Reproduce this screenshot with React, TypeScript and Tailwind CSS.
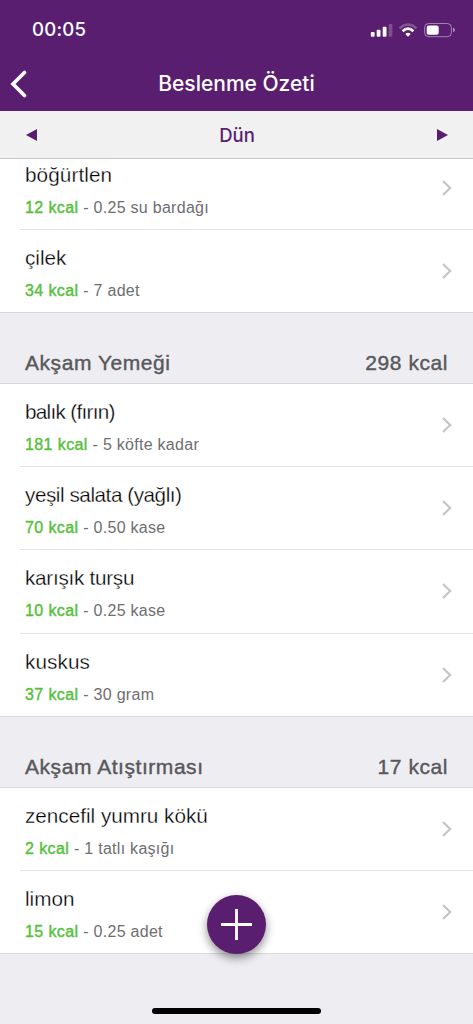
import React from 'react';

type Food = {
  name: string;
  kcal: number;
  amount: string;
  tracking?: string;
};

type Meal = {
  title: string;
  total?: number;
  foods: Food[];
};

const MEALS: Meal[] = [
  {
    title: 'Ara Öğün',
    foods: [
      { name: 'böğürtlen', kcal: 12, amount: '0.25 su bardağı', tracking: 'tracking-[0.1px]' },
      { name: 'çilek', kcal: 34, amount: '7 adet' },
    ],
  },
  {
    title: 'Akşam Yemeği',
    total: 298,
    foods: [
      { name: 'balık (fırın)', kcal: 181, amount: '5 köfte kadar', tracking: 'tracking-[-0.7px]' },
      { name: 'yeşil salata (yağlı)', kcal: 70, amount: '0.50 kase', tracking: 'tracking-[-0.45px]' },
      { name: 'karışık turşu', kcal: 10, amount: '0.25 kase', tracking: 'tracking-[-0.27px]' },
      { name: 'kuskus', kcal: 37, amount: '30 gram', tracking: 'tracking-[0.1px]' },
    ],
  },
  {
    title: 'Akşam Atıştırması',
    total: 17,
    foods: [
      { name: 'zencefil yumru kökü', kcal: 2, amount: '1 tatlı kaşığı' },
      { name: 'limon', kcal: 15, amount: '0.25 adet' },
    ],
  },
];

const ROW_CLASSES = 'flex h-[83.2px] items-center justify-between pr-[21px] ml-[20px] pl-[5px] border-b border-[#e4e4e6] last:ml-0 last:pl-[25px] last:border-[#dadade]';
const NAME_CLASSES = 'text-[20.7px] leading-[26px] text-black [-webkit-text-stroke:0.3px_white]';
const DETAIL_CLASSES = 'mt-[9px] text-[16px] leading-[22px] tracking-[0.28px] text-[#6e6e70]';
const KCAL_CLASSES = 'tracking-[0.4px] text-[#55c03a] [-webkit-text-stroke:0.4px_#55c03a]';
const HEADER_CLASSES = 'flex h-[71px] items-end justify-between border-b border-[#dadade] pr-[25px] pl-[25px] pb-[7px] text-[21px] leading-[26px] tracking-[0.55px] text-[#58585b] [-webkit-text-stroke:0.4px_#58585b]';

const StatusIcons = () => (
  <svg width="86" height="16" viewBox="0 0 86 16" fill="none">
    <rect x="0.8" y="10" width="3.8" height="4.8" rx="1" fill="white" />
    <rect x="6.7" y="7.8" width="3.8" height="7" rx="1" fill="white" />
    <rect x="12.7" y="4.8" width="3.8" height="10" rx="1" fill="white" />
    <rect x="18.6" y="2" width="3.8" height="12.8" rx="1" fill="white" fillOpacity="0.22" />
    <path d="M29.5 6.4Q38 -1.4 46.5 6.4" stroke="white" strokeOpacity="0.25" strokeWidth="2.6" />
    <path d="M32.6 9.2Q38 4.2 43.4 9.2" stroke="white" strokeWidth="2.7" />
    <path d="M35.3 12Q38 9.4 40.7 12L38 14.8Z" fill="white" />
    <rect x="54.6" y="1.5" width="26.8" height="13.2" rx="4" stroke="white" strokeOpacity="0.45" />
    <rect x="56.7" y="3.4" width="12" height="9.4" rx="2" fill="white" />
    <path d="M83 5.8Q85 6.4 85 8T83 10.3Z" fill="white" fillOpacity="0.5" />
  </svg>
);

const FoodRow = ({ food }: { food: Food }) => (
  <li className={ROW_CLASSES}>
    <div className="pt-[5px]">
      <p className={`${NAME_CLASSES} ${food.tracking ?? ''}`}>{food.name}</p>
      <p className={DETAIL_CLASSES}>
        <span className={KCAL_CLASSES}>{food.kcal} kcal</span> - {food.amount}
      </p>
    </div>
    <svg width="10" height="16" viewBox="0 0 10 16" fill="none">
      <path d="M1 1L8.2 8L1 15" stroke="#c5c5c9" strokeWidth="2.2" />
    </svg>
  </li>
);

const MealSection = ({ meal }: { meal: Meal }) => (
  <section>
    {meal.total !== undefined &&
      <h2 className={HEADER_CLASSES}>
        <span>{meal.title}</span>
        <span>{meal.total} kcal</span>
      </h2>
    }
    <ul className="bg-white">
      {meal.foods.map((food) => <FoodRow key={food.name} food={food} />)}
    </ul>
  </section>
);

const App = () => {
  return (
    <div className="relative flex h-[1024px] w-[473px] flex-col overflow-hidden bg-[#eeedf2] font-['Liberation_Sans',Arial,sans-serif]">
      <header className="h-[111px] shrink-0 bg-[#5a1e70] font-[Inter,sans-serif] text-white">
        <div className="flex h-[56px] items-center justify-between pt-[3px] pr-[17px] pl-[32px]">
          <span className="text-[18.6px] font-medium tracking-[0.2px]">00:05</span>
          <StatusIcons />
        </div>
        <div className="grid h-[55px] grid-cols-[60px_1fr_60px] items-center">
          <svg className="ml-[9px]" width="18" height="28" viewBox="0 0 18 28" fill="none">
            <path d="M15.5 2.5L4 14L15.5 25.5" stroke="white" strokeWidth="3.6" strokeLinecap="round" />
          </svg>
          <h1 className="text-center text-[21px] font-medium">Beslenme Özeti</h1>
        </div>
      </header>

      <nav className="flex h-[48px] shrink-0 items-center justify-between border-b border-[#c9c9cb] bg-[#f1f1f1] px-[26px] text-[#5a1e70]">
        <svg width="11" height="12" viewBox="0 0 11 12"><path d="M0 6L11 0V12Z" fill="currentColor" /></svg>
        <span className="pt-[2px] font-[Inter,sans-serif] text-[18.5px] font-medium">Dün</span>
        <svg className="mr-[-1px]" width="11" height="12" viewBox="0 0 11 12"><path d="M11 6L0 0V12Z" fill="currentColor" /></svg>
      </nav>

      {/* The list is scrolled part of the way through its first row */}
      <main className="min-h-0 flex-1 overflow-hidden">
        <div className="-mt-[12.4px]">
          {MEALS.map((meal) => <MealSection key={meal.title} meal={meal} />)}
        </div>
      </main>

      <button className="absolute top-[895px] left-[207px] flex size-[59px] items-center justify-center rounded-full bg-[#5a1e70] shadow-[0_4px_10px_rgba(0,0,0,0.45)]">
        <svg width="31" height="31" viewBox="0 0 31 31">
          <path d="M15.5 0V31M0 15.5H31" stroke="white" strokeWidth="2.8" />
        </svg>
      </button>
      <div className="absolute bottom-[10px] left-[152px] h-[6px] w-[169px] rounded-full bg-black" />
    </div>
  );
};

export default App;
